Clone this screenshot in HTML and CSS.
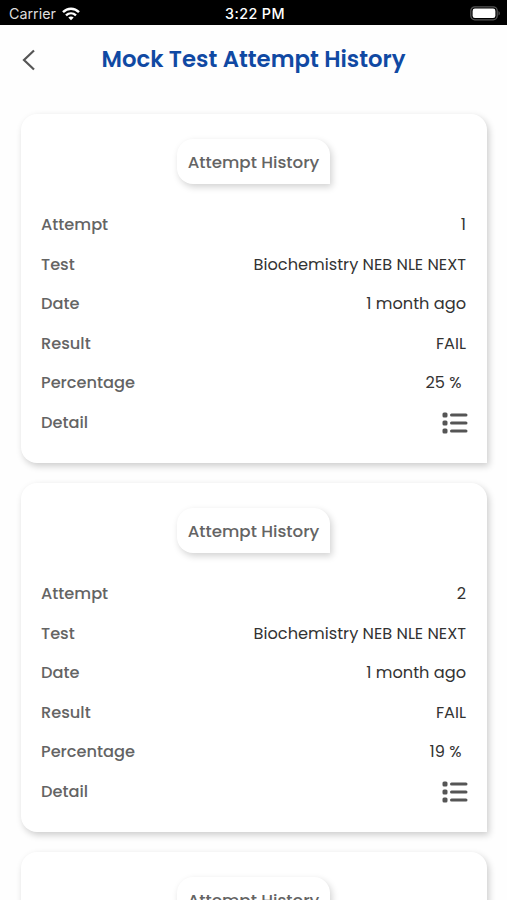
FILE: index.html
```html
<!DOCTYPE html>
<html lang="en">
<head>
<meta charset="utf-8">
<title>Mock Test Attempt History</title>
<link rel="stylesheet" href="styles.css">
</head>

<body>

<div class="status_bar">
    <div class="carrier">
        <span>Carrier</span>
        <svg class="wifi" width="18" height="14" viewBox="0 0 18 14" fill="none" stroke="#fff" stroke-width="2.4">
            <path d="M1 5.2C5.5.6 12.5.6 17 5.2" />
            <path d="M4 8.4c2.9-2.7 7.1-2.7 10 0" />
            <path d="M9 13.3 6.3 10.6c1.5-1.4 3.9-1.4 5.4 0z" fill="#fff" stroke="none" />
        </svg>
    </div>
    <div class="time">3:22 PM</div>
    <svg class="battery" width="31" height="15" viewBox="0 0 31 15">
        <rect x=".8" y=".8" width="26.4" height="13" rx="4" fill="none" stroke="#555" stroke-width="1.3" />
        <rect x="2.6" y="2.6" width="22.8" height="9.4" rx="2.3" fill="#fff" />
        <path d="M28.5 5v4.600c1.800-.8 1.800-3.800 0-4.600z" fill="#555" />
    </svg>
</div>

<div class="header">
    <svg class="back" width="14" height="22" viewBox="0 0 14 22" fill="none" stroke="#555" stroke-width="2.2">
        <path d="M12 1.500 2 11l10 9.500" />
    </svg>
    <h1>Mock Test Attempt History</h1>
</div>

<div class="content">
    <div class="card">
        <div class="card_title">Attempt History</div>
        <div class="row"><span class="label">Attempt</span><span class="value">1</span></div>
        <div class="row"><span class="label">Test</span><span class="value">Biochemistry NEB NLE NEXT</span></div>
        <div class="row"><span class="label">Date</span><span class="value">1 month ago</span></div>
        <div class="row"><span class="label">Result</span><span class="value">FAIL</span></div>
        <div class="row"><span class="label">Percentage</span><span class="value percent">25 %</span></div>
        <div class="row">
            <span class="label">Detail</span>
            <svg class="list_icon" width="26" height="22" viewBox="0 0 26 22" fill="#555">
                <rect x=".5" y=".5" width="5" height="5" rx="1.5" /><rect x="8" y="1.5" width="17.5" height="3" rx="1.5" />
                <rect x=".5" y="8.5" width="5" height="5" rx="1.5" /><rect x="8" y="9.5" width="17.5" height="3" rx="1.5" />
                <rect x=".5" y="16.5" width="5" height="5" rx="1.5" /><rect x="8" y="17.5" width="17.5" height="3" rx="1.5" />
            </svg>
        </div>
    </div>

    <div class="card">
        <div class="card_title">Attempt History</div>
        <div class="row"><span class="label">Attempt</span><span class="value">2</span></div>
        <div class="row"><span class="label">Test</span><span class="value">Biochemistry NEB NLE NEXT</span></div>
        <div class="row"><span class="label">Date</span><span class="value">1 month ago</span></div>
        <div class="row"><span class="label">Result</span><span class="value">FAIL</span></div>
        <div class="row"><span class="label">Percentage</span><span class="value percent">19 %</span></div>
        <div class="row">
            <span class="label">Detail</span>
            <svg class="list_icon" width="26" height="22" viewBox="0 0 26 22" fill="#555">
                <rect x=".5" y=".5" width="5" height="5" rx="1.5" /><rect x="8" y="1.5" width="17.5" height="3" rx="1.5" />
                <rect x=".5" y="8.5" width="5" height="5" rx="1.5" /><rect x="8" y="9.5" width="17.5" height="3" rx="1.5" />
                <rect x=".5" y="16.5" width="5" height="5" rx="1.5" /><rect x="8" y="17.5" width="17.5" height="3" rx="1.5" />
            </svg>
        </div>
    </div>

    <div class="card">
        <div class="card_title">Attempt History</div>
    </div>
</div>

</body>
</html>
```

FILE: styles.css
```css
* {
    box-sizing: border-box;
}
body {
    margin: 0;
    height: 900px;
    overflow: hidden;
    display: flex;
    flex-direction: column;
    background: #fefefe;
    color: #646464;
    font: 16.2px/24px Poppins, Inter, sans-serif;
}
.status_bar {
    flex: none;
    height: 25px;
    padding: 2px 6px 0 9px;
    display: grid;
    grid-template-columns: 1fr auto 1fr;
    align-items: center;
    background: #000;
    color: #fff;
    font: 14.3px/22px Inter, sans-serif;
}
.carrier {
    display: flex;
    align-items: center;
    gap: 6px;
    color: #ddd;
}
.time {
    font-weight: 500;
    letter-spacing: 0.4px;
}
.battery {
    justify-self: end;
}
.header {
    flex: none;
    height: 89px;
    padding: 18px 22px 0;
    display: grid;
    grid-template-columns: 14px 1fr 14px;
    align-items: start;
}
.back {
    margin-top: 6px;
}
h1 {
    margin: 0;
    color: #1049a3;
    font-size: 22.75px;
    line-height: 32px;
    font-weight: 600;
    text-align: center;
    white-space: nowrap;
}
.content {
    flex: 1;
    min-height: 0;
    padding: 0 20px 0 21px;
}
.card {
    height: 349px;
    margin-bottom: 20px;
    padding: 25px 21px 0 20px;
    background: #fff;
    border-radius: 16px 16px 0 16px;
    box-shadow: 2px 3px 7px rgba(0, 0, 0, 0.2);
}
.card_title {
    width: 153px;
    height: 45px;
    margin: 0 auto 21.3px;
    background: #fff;
    border-radius: 16px 16px 0 16px;
    box-shadow: 2px 3px 7px rgba(0, 0, 0, 0.18);
    font-size: 16.7px;
    font-weight: 500;
    line-height: 46px;
    text-align: center;
    white-space: nowrap;
}
.row {
    height: 39.6px;
    display: flex;
    justify-content: space-between;
    align-items: center;
}
.label {
    font-weight: 500;
}
.value {
    color: #333;
}
.percent {
    margin-right: 4.5px;
}
.list_icon {
    margin: -1px -1.5px 0 0;
}
```
